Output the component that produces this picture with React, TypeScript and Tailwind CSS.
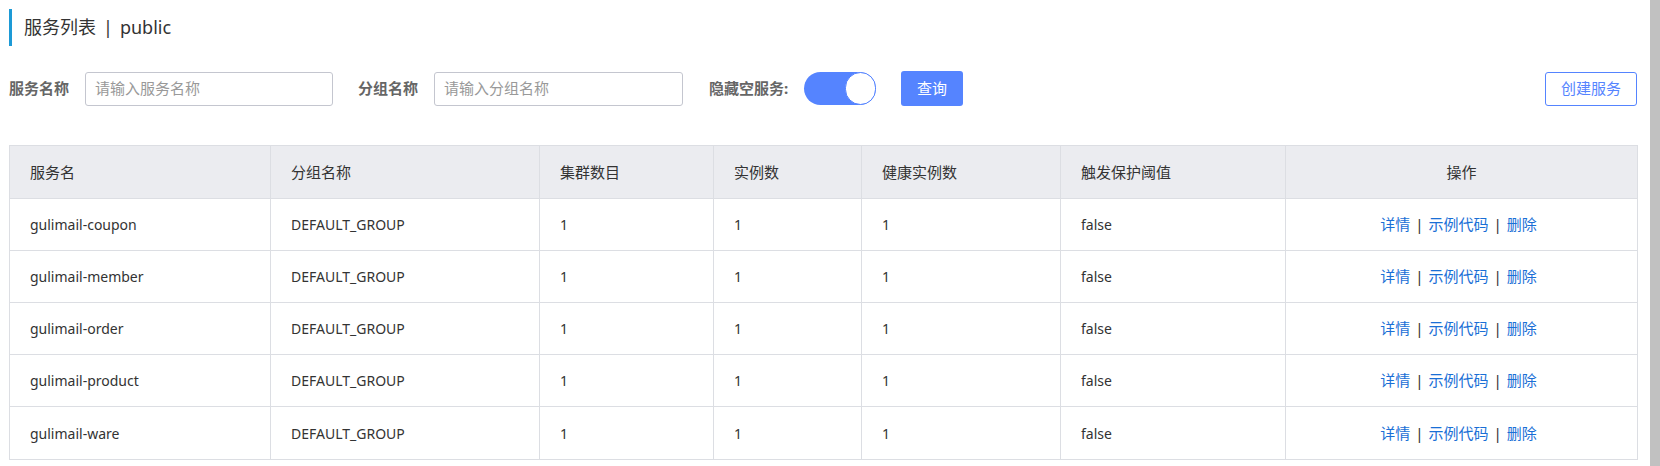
import React from "react";

const rows = [
  "gulimail-coupon",
  "gulimail-member",
  "gulimail-order",
  "gulimail-product",
  "gulimail-ware",
];

const headers = ["服务名", "分组名称", "集群数目", "实例数", "健康实例数", "触发保护阈值"];

const gridCols = "grid grid-cols-[261px_269px_174px_148px_199px_225px_351px]";

export default function App() {
  return (
    <div
      className="flex w-[1660px] h-[466px] overflow-hidden bg-white text-[#333]"
      style={{ fontFamily: '"Noto Sans", "Noto Sans CJK SC", sans-serif' }}
    >
      <div className="w-[1650px] pl-[9px] pr-[13px] pt-[9px]">
        {/* Title */}
        <div className="h-[37px] border-l-[3px] border-[#1d9ad6] pl-[12px] flex items-center text-[18px] text-[#333]">
          <span>服务列表</span>
          <span className="mx-[7px]">|</span>
          <span>public</span>
        </div>

        {/* Filters */}
        <div className="mt-[25px] h-[35px] flex items-center text-[15px]">
          <span className="font-bold text-[#666] w-[76px]">服务名称</span>
          <div className="w-[248px] h-[34px] border border-[#c4c6cf] rounded-[3px] flex items-center px-[9px] text-[#999]">
            请输入服务名称
          </div>
          <span className="font-bold text-[#666] ml-[25px] w-[76px]">分组名称</span>
          <div className="w-[249px] h-[34px] border border-[#c4c6cf] rounded-[3px] flex items-center px-[9px] text-[#999]">
            请输入分组名称
          </div>
          <span className="font-bold text-[#666] ml-[26px] w-[95px]">隐藏空服务:</span>
          <div className="w-[72px] h-[33px] rounded-full bg-[#5584ff] flex items-center justify-end">
            <div className="w-[31px] h-[33px] rounded-full bg-white border border-[#5584ff]" />
          </div>
          <div className="ml-[25px] w-[62px] h-[35px] rounded-[3px] bg-[#5584ff] text-white flex items-center justify-center">
            查询
          </div>
          <div className="ml-auto w-[92px] h-[34px] rounded-[3px] border border-[#5584ff] text-[#5584ff] flex items-center justify-center">
            创建服务
          </div>
        </div>

        {/* Table */}
        <div className="mt-[39px] w-[1629px] border border-[#dcdee3] text-[14px] text-[#333]">
          <div className={`${gridCols} h-[53px] bg-[#ebecf0] border-b border-[#dcdee3] text-[15px]`}>
            {headers.map((h) => (
              <div key={h} className="border-r border-[#dcdee3] flex items-center pl-[20px]">
                {h}
              </div>
            ))}
            <div className="flex items-center justify-center">操作</div>
          </div>
          {rows.map((name, i) => (
            <div
              key={name}
              className={`${gridCols} h-[52px] ${i < rows.length - 1 ? "border-b border-[#dcdee3]" : ""}`}
            >
              <div className="border-r border-[#dcdee3] flex items-center pl-[20px]">{name}</div>
              <div className="border-r border-[#dcdee3] flex items-center pl-[20px]">DEFAULT_GROUP</div>
              <div className="border-r border-[#dcdee3] flex items-center pl-[20px]">1</div>
              <div className="border-r border-[#dcdee3] flex items-center pl-[20px]">1</div>
              <div className="border-r border-[#dcdee3] flex items-center pl-[20px]">1</div>
              <div className="border-r border-[#dcdee3] flex items-center pl-[20px]">false</div>
              <div className="flex items-center justify-center text-[15px] pr-[6px]">
                <span className="text-[#1a6fd6]">详情</span>
                <span className="mx-[5px] text-[#333]">|</span>
                <span className="text-[#1a6fd6]">示例代码</span>
                <span className="mx-[5px] text-[#333]">|</span>
                <span className="text-[#1a6fd6]">删除</span>
              </div>
            </div>
          ))}
        </div>
      </div>
      <div className="w-[10px] h-full bg-[#c1c1c1]" />
    </div>
  );
}
